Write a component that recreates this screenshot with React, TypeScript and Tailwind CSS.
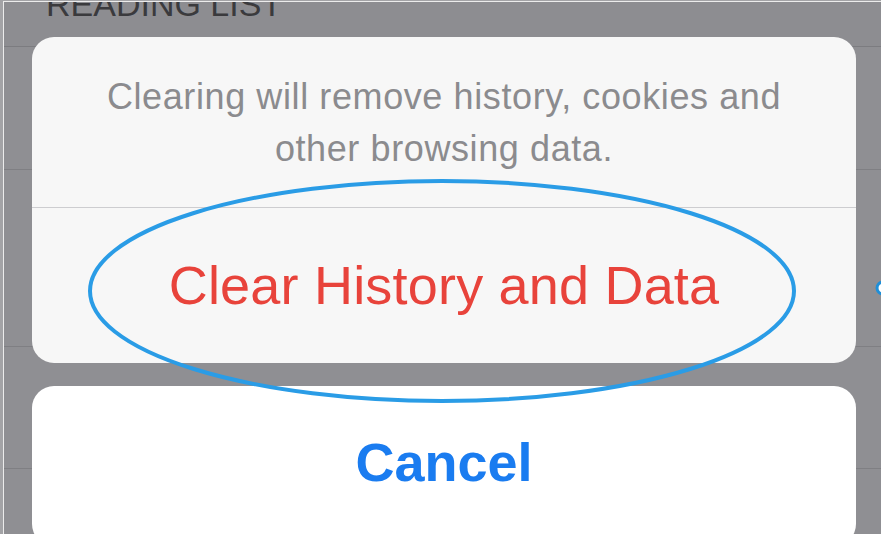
import React from "react";

const font = { fontFamily: '"Liberation Sans", Arial, sans-serif' };

function BackgroundList() {
  return (
    <div className="flex h-full flex-col">
      <div className="h-[45px] border-b border-[#7c7c80] bg-[#8d8d91] pl-[42px]">
        <div className="-mt-[18px] text-[34px] leading-[40px] text-[#3a3a3d]">READING LIST</div>
      </div>
      <div className="h-[123px] border-b border-[#7f7f83] bg-[#8f8f93]" />
      <div className="h-[177px] border-b border-[#7f7f83] bg-[#8f8f93]" />
      <div className="h-[122px] border-b border-[#7f7f83] bg-[#8f8f93]" />
      <div className="flex-1 bg-[#8f8f93]" />
    </div>
  );
}

function ActionSheet() {
  return (
    <div className="absolute left-[28px] top-[35px] flex w-[824px] flex-col gap-[23px]">
      <div className="overflow-hidden rounded-[22px] bg-[#f7f7f7]">
        <div className="flex h-[171px] items-center justify-center border-b border-[#cdcdd0] px-6 pt-[2px]">
          <p className="text-center text-[36px] leading-[52px] tracking-[0.6px] text-[#8b8b8e]">
            Clearing will remove history, cookies and
            <br />
            other browsing data.
          </p>
        </div>
        <div className="flex h-[155px] items-center justify-center">
          <span className="text-[54px] tracking-[0.2px] text-[#e8433b]">Clear History and Data</span>
        </div>
      </div>
      <div className="flex h-[160px] items-start justify-center rounded-[22px] bg-white pt-[46px]">
        <span className="text-[54px] font-bold leading-[60px] text-[#1a7cf0]">Cancel</span>
      </div>
    </div>
  );
}

// hand-drawn highlight ring around the destructive action
function Highlight() {
  return (
    <svg className="pointer-events-none absolute left-0 top-0" width="878" height="533" viewBox="0 0 878 533">
      <ellipse cx="438" cy="289" rx="352" ry="110" fill="none" stroke="#2a9ce6" strokeWidth="4" />
      <circle cx="879" cy="286" r="6" fill="#fff" stroke="#1f8fd8" strokeWidth="3" />
    </svg>
  );
}

export default function App() {
  return (
    <div className="h-[534px] w-[881px] overflow-hidden bg-[#a3a3a6]" style={font}>
      <div className="relative ml-[3px] mt-[1px] h-[533px] overflow-hidden border-l border-t border-[#ececec]">
        <BackgroundList />
        <ActionSheet />
        <Highlight />
      </div>
    </div>
  );
}
